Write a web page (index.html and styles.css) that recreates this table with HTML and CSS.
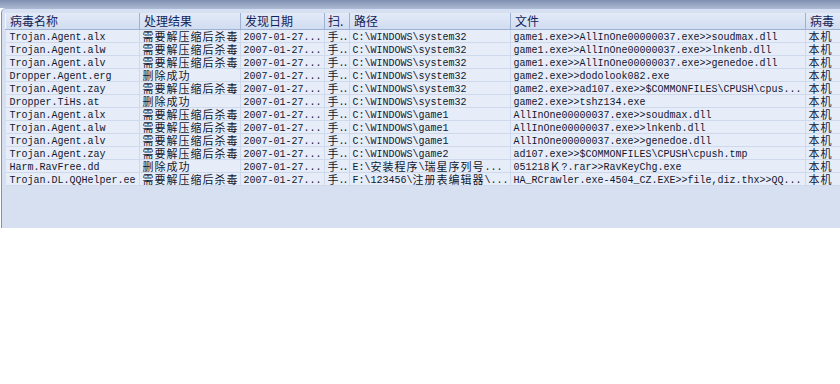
FILE: index.html
```html
<!DOCTYPE html>
<html>
<head>
<meta charset="utf-8">
<link rel="stylesheet" href="styles.css">
</head>
<body>
<div class="topbar"></div>
<div class="panel">
  <table class="grid">
    <colgroup>
      <col class="c1"><col class="c2"><col class="c3"><col class="c4"><col class="c5"><col class="c6"><col class="c7">
    </colgroup>
    <thead>
      <tr>
        <th>病毒名称</th><th>处理结果</th><th>发现日期</th><th class="tight">扫.</th><th>路径</th><th>文件</th><th>病毒</th>
      </tr>
    </thead>
    <tbody>
      <tr><td>Trojan.Agent.alx</td><td><span class="cn">需要解压缩后杀毒</span></td><td>2007-01-27...</td><td><span class="cn">手</span><span class="dots">..</span></td><td>C:\WINDOWS\system32</td><td>game1.exe&gt;&gt;AllInOne00000037.exe&gt;&gt;soudmax.dll</td><td><span class="cn">本机</span></td></tr>
      <tr><td>Trojan.Agent.alw</td><td><span class="cn">需要解压缩后杀毒</span></td><td>2007-01-27...</td><td><span class="cn">手</span><span class="dots">..</span></td><td>C:\WINDOWS\system32</td><td>game1.exe&gt;&gt;AllInOne00000037.exe&gt;&gt;lnkenb.dll</td><td><span class="cn">本机</span></td></tr>
      <tr><td>Trojan.Agent.alv</td><td><span class="cn">需要解压缩后杀毒</span></td><td>2007-01-27...</td><td><span class="cn">手</span><span class="dots">..</span></td><td>C:\WINDOWS\system32</td><td>game1.exe&gt;&gt;AllInOne00000037.exe&gt;&gt;genedoe.dll</td><td><span class="cn">本机</span></td></tr>
      <tr><td>Dropper.Agent.erg</td><td><span class="cn">删除成功</span></td><td>2007-01-27...</td><td><span class="cn">手</span><span class="dots">..</span></td><td>C:\WINDOWS\system32</td><td>game2.exe&gt;&gt;dodolook082.exe</td><td><span class="cn">本机</span></td></tr>
      <tr><td>Trojan.Agent.zay</td><td><span class="cn">需要解压缩后杀毒</span></td><td>2007-01-27...</td><td><span class="cn">手</span><span class="dots">..</span></td><td>C:\WINDOWS\system32</td><td>game2.exe&gt;&gt;ad107.exe&gt;&gt;$COMMONFILES\CPUSH\cpus...</td><td><span class="cn">本机</span></td></tr>
      <tr><td>Dropper.TiHs.at</td><td><span class="cn">删除成功</span></td><td>2007-01-27...</td><td><span class="cn">手</span><span class="dots">..</span></td><td>C:\WINDOWS\system32</td><td>game2.exe&gt;&gt;tshz134.exe</td><td><span class="cn">本机</span></td></tr>
      <tr><td>Trojan.Agent.alx</td><td><span class="cn">需要解压缩后杀毒</span></td><td>2007-01-27...</td><td><span class="cn">手</span><span class="dots">..</span></td><td>C:\WINDOWS\game1</td><td>AllInOne00000037.exe&gt;&gt;soudmax.dll</td><td><span class="cn">本机</span></td></tr>
      <tr><td>Trojan.Agent.alw</td><td><span class="cn">需要解压缩后杀毒</span></td><td>2007-01-27...</td><td><span class="cn">手</span><span class="dots">..</span></td><td>C:\WINDOWS\game1</td><td>AllInOne00000037.exe&gt;&gt;lnkenb.dll</td><td><span class="cn">本机</span></td></tr>
      <tr><td>Trojan.Agent.alv</td><td><span class="cn">需要解压缩后杀毒</span></td><td>2007-01-27...</td><td><span class="cn">手</span><span class="dots">..</span></td><td>C:\WINDOWS\game1</td><td>AllInOne00000037.exe&gt;&gt;genedoe.dll</td><td><span class="cn">本机</span></td></tr>
      <tr><td>Trojan.Agent.zay</td><td><span class="cn">需要解压缩后杀毒</span></td><td>2007-01-27...</td><td><span class="cn">手</span><span class="dots">..</span></td><td>C:\WINDOWS\game2</td><td>ad107.exe&gt;&gt;$COMMONFILES\CPUSH\cpush.tmp</td><td><span class="cn">本机</span></td></tr>
      <tr><td>Harm.RavFree.dd</td><td><span class="cn">删除成功</span></td><td>2007-01-27...</td><td><span class="cn">手</span><span class="dots">..</span></td><td>E:\<span class="cn">安装程序</span>\<span class="cn">瑞星序列号</span>...</td><td>051218<span class="cn">Ｋ</span>?.rar&gt;&gt;RavKeyChg.exe</td><td><span class="cn">本机</span></td></tr>
      <tr><td>Trojan.DL.QQHelper.ee</td><td><span class="cn">需要解压缩后杀毒</span></td><td>2007-01-27...</td><td><span class="cn">手</span><span class="dots">..</span></td><td>F:\123456\<span class="cn">注册表编辑器</span>\...</td><td>HA_RCrawler.exe-4504_CZ.EXE&gt;&gt;file,diz.thx&gt;&gt;QQ...</td><td><span class="cn">本机</span></td></tr>
    </tbody>
  </table>
</div>
</body>
</html>
```

FILE: styles.css
```css
html, body {
  margin: 0;
  padding: 0;
  background: #ffffff;
  width: 840px;
  height: 384px;
  overflow: hidden;
}

.topbar {
  height: 8px;
  background: linear-gradient(#7e8fb1, #a9b6cf);
}

.panel {
  height: 215px;
  margin-left: 1px;
  padding: 4px 0 0 3px;
  background: #d6e0f1;
  border-left: 1px solid #7f93ba;
  border-top: 1px solid #a8b8d6;
  border-top-left-radius: 5px;
  overflow: hidden;
}

.grid {
  table-layout: fixed;
  border-collapse: collapse;
  width: 859px;
  font-family: "Liberation Mono", monospace;
  font-size: 10px;
  color: #101830;
}

.c1 { width: 134px; }
.c2 { width: 101px; }
.c3 { width: 84px; }
.c4 { width: 25px; }
.c5 { width: 161px; }
.c6 { width: 295px; }
.c7 { width: 59px; }

.grid th {
  height: 16px;
  padding: 0 0 0 4px;
  text-align: left;
  font-family: "Noto Sans CJK SC", sans-serif;
  font-weight: normal;
  font-size: 12px;
  line-height: 16px;
  color: #14245a;
  background: linear-gradient(#e2eaf8, #d0dcf0);
  border-right: 1px solid #9fb1d2;
  border-left: 1px solid #f4f7fc;
  border-bottom: 1px solid #9fb1d2;
  white-space: nowrap;
  overflow: hidden;
}

.grid th.tight {
  padding-left: 3px;
}

.grid td {
  height: 11px;
  padding: 2px 0 0 3px;
  line-height: 11px;
  background: #e6edf9;
  box-shadow: inset -1px -1px 0 #cfd9ec;
  white-space: nowrap;
  overflow: hidden;
}

.grid td:first-child {
  padding-left: 4px;
}

.cn {
  display: inline-block;
  height: 12px;
  margin-top: -2px;
  font-family: "Noto Sans CJK SC", sans-serif;
  font-size: 11px;
  letter-spacing: 1px;
  line-height: 12px;
  vertical-align: top;
}

.dots {
  letter-spacing: -2px;
  margin-left: -1px;
}
```
